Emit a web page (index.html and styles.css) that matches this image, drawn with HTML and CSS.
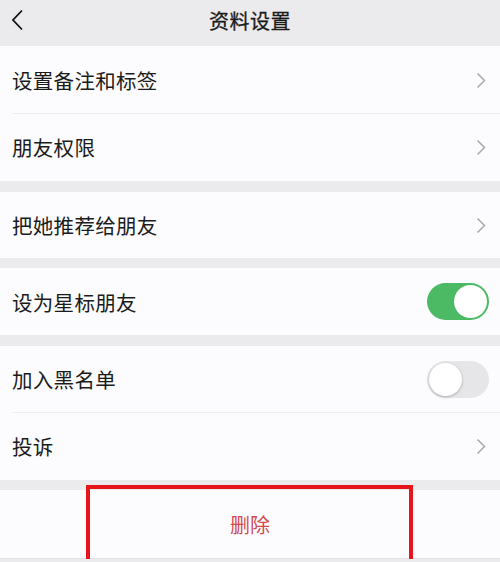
FILE: index.html
```html
<!DOCTYPE html>
<html>
  <head>
    <meta charset="UTF-8" />
    <meta name="viewport" content="width=device-width, initial-scale=1.0" />
    <title>资料设置</title>
    <link rel="stylesheet" href="styles.css">
  </head>
  <body>
    <div class="nav-bar">
      <svg class="back-icon" width="14" height="22" viewBox="0 0 14 22">
        <polyline points="11,1.5 2,11 11,20.5" fill="none" stroke="#111" stroke-width="1.8" />
      </svg>
      <span class="nav-title">资料设置</span>
    </div>

    <div class="group">
      <div class="cell h67">
        <span class="cell-label">设置备注和标签</span>
        <svg class="arrow" width="10" height="17" viewBox="0 0 10 17">
          <polyline points="1.5,1.5 8.5,8.5 1.5,15.5" fill="none" stroke="#a9a9ad" stroke-width="1.5" />
        </svg>
      </div>
      <div class="cell">
        <span class="cell-label">朋友权限</span>
        <svg class="arrow" width="10" height="17" viewBox="0 0 10 17">
          <polyline points="1.5,1.5 8.5,8.5 1.5,15.5" fill="none" stroke="#a9a9ad" stroke-width="1.5" />
        </svg>
      </div>
    </div>

    <div class="group short-gap">
      <div class="cell h66">
        <span class="cell-label">把她推荐给朋友</span>
        <svg class="arrow" width="10" height="17" viewBox="0 0 10 17">
          <polyline points="1.5,1.5 8.5,8.5 1.5,15.5" fill="none" stroke="#a9a9ad" stroke-width="1.5" />
        </svg>
      </div>
    </div>

    <div class="group">
      <div class="cell h67">
        <span class="cell-label">设为星标朋友</span>
        <div class="switch on"><div class="knob"></div></div>
      </div>
    </div>

    <div class="group short-gap">
      <div class="cell h66">
        <span class="cell-label">加入黑名单</span>
        <div class="switch"><div class="knob"></div></div>
      </div>
      <div class="cell">
        <span class="cell-label">投诉</span>
        <svg class="arrow" width="10" height="17" viewBox="0 0 10 17">
          <polyline points="1.5,1.5 8.5,8.5 1.5,15.5" fill="none" stroke="#a9a9ad" stroke-width="1.5" />
        </svg>
      </div>
    </div>

    <div class="group last">
      <div class="delete-cell">
        <span class="delete-text">删除</span>
        <div class="mark-box"></div>
      </div>
    </div>
  </body>
</html>
```

FILE: styles.css
```css
body {
  margin: 0;
  background-color: #ebeaec;
  font-family: "Noto Sans CJK SC", "Noto Sans", sans-serif;
  color: #1b1b1b;
  overflow: hidden;
}
.nav-bar {
  position: relative;
  display: flex;
  align-items: center;
  justify-content: center;
  height: 46px;
  background-color: #ebeaec;
}
.back-icon {
  position: absolute;
  left: 11px;
  top: 9px;
}
.nav-title {
  font-size: 20px;
  letter-spacing: 0.5px;
  margin-top: -5px;
  -webkit-text-stroke: 0.3px #1b1b1b;
}
.group {
  background-color: #fcfbfd;
  margin-bottom: 11px;
}
.group.short-gap {
  margin-bottom: 10px;
}
.group.last {
  margin-bottom: 0;
}
.cell {
  position: relative;
  display: flex;
  align-items: center;
  justify-content: space-between;
  height: 68px;
  padding: 0 14px 0 12px;
  box-sizing: border-box;
}
.cell.h67 {
  height: 67px;
}
.cell.h66 {
  height: 66px;
}
.cell + .cell::before {
  content: '';
  position: absolute;
  top: 0;
  left: 12px;
  right: 0;
  height: 1px;
  background-color: #ededef;
}
.cell-label {
  font-size: 20.5px;
  letter-spacing: 0.3px;
}
.arrow {
  margin-top: 1px;
}
.switch {
  position: relative;
  width: 62px;
  height: 37px;
  margin-right: -3px;
  border-radius: 19px;
  background-color: #e6e5e8;
  box-sizing: border-box;
}
.switch .knob {
  position: absolute;
  top: 2px;
  left: 2px;
  width: 33px;
  height: 33px;
  border-radius: 50%;
  background-color: #fff;
  box-shadow: 0 1px 3px rgba(0, 0, 0, 0.25);
}
.switch.on {
  background-color: #4cb964;
}
.switch.on .knob {
  left: 27px;
  box-shadow: none;
}
.delete-cell {
  position: relative;
  display: flex;
  align-items: center;
  justify-content: center;
  height: 68px;
  border-bottom: 1px solid #e2e1e4;
}
.delete-text {
  font-size: 20px;
  color: #d24a4d;
}
.mark-box {
  position: absolute;
  left: 86px;
  top: -5px;
  width: 327px;
  height: 90px;
  border: 4px solid #e8141c;
  box-sizing: border-box;
}
```
